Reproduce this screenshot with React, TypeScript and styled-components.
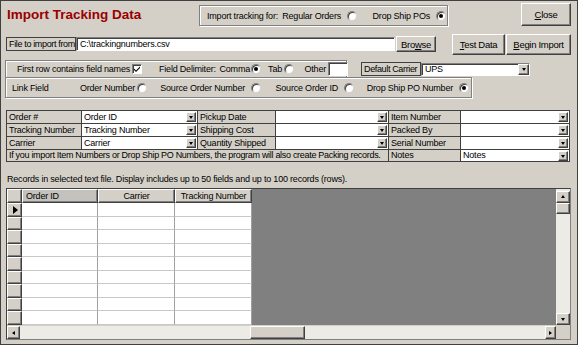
import React from 'react';
import styled, { createGlobalStyle, css } from 'styled-components';

const GlobalStyle = createGlobalStyle`
  body {
    margin: 0;
    background: #fff;
  }
`;

const FONT = `"Liberation Sans", Arial, sans-serif`;

const raised = css`
  box-sizing: border-box;
  background: #d4d0c8;
  border: 1px solid;
  border-color: #fff #404040 #404040 #fff;
  box-shadow: inset -1px -1px 0 #808080;
`;

const sunken = css`
  box-sizing: border-box;
  background: #fff;
  border: 1px solid;
  border-color: #808080 #fff #fff #808080;
  box-shadow: inset 1px 1px 0 #404040;
`;

const etched = css`
  box-sizing: border-box;
  border: 1px solid #808080;
  box-shadow: 1px 1px 0 #fff, inset 1px 1px 0 #fff;
`;

const Window = styled.div`
  width: 578px;
  height: 345px;
  box-sizing: border-box;
  border: 1px solid #404040;
  background: #d4d0c8;
  font-family: ${FONT};
  font-size: 9px;
  letter-spacing: -0.2px;
  color: #000;
  overflow: hidden;
`;

const Row = styled.div<{ $mt?: number; $h: number }>`
  display: flex;
  align-items: center;
  height: ${p => p.$h}px;
  margin-top: ${p => p.$mt ?? 0}px;
`;

const TopBar = styled.div`
  display: flex;
  align-items: flex-start;
  height: 30px;
`;

const Title = styled.h1`
  margin: 6px 0 0 6px;
  width: 192px;
  font-size: 13.5px;
  line-height: 16px;
  letter-spacing: 0;
  font-weight: bold;
  color: #990000;
`;

const GroupBox = styled.div<{ $w: number; $h: number; $ml?: number; $mt?: number }>`
  ${etched};
  display: flex;
  align-items: center;
  width: ${p => p.$w}px;
  height: ${p => p.$h}px;
  margin-left: ${p => p.$ml ?? 0}px;
  margin-top: ${p => p.$mt ?? 0}px;
`;

const Slot = styled.div<{ $w: number; $ml?: number; $end?: boolean; $gap?: number }>`
  display: flex;
  align-items: center;
  justify-content: ${p => (p.$end ? 'flex-end' : 'flex-start')};
  gap: ${p => p.$gap ?? 4}px;
  width: ${p => p.$w}px;
  margin-left: ${p => p.$ml ?? 0}px;
  white-space: nowrap;
  flex-shrink: 0;
`;

const Button = styled.button<{ $w: number; $h: number; $ml?: number; $mt?: number }>`
  ${raised};
  width: ${p => p.$w}px;
  height: ${p => p.$h}px;
  margin-left: ${p => p.$ml ?? 0}px;
  margin-top: ${p => p.$mt ?? 0}px;
  padding: 0;
  font-family: ${FONT};
  font-size: 9.5px;
  letter-spacing: -0.3px;
  color: #000;
  flex-shrink: 0;
`;

const CloseButton = styled(Button)`
  margin-left: auto;
  margin-right: 6px;
`;

const BoxLabel = styled.div<{ $w: number; $ml?: number }>`
  box-sizing: border-box;
  width: ${p => p.$w}px;
  height: 14px;
  margin-left: ${p => p.$ml ?? 0}px;
  padding-left: 2px;
  border: 1px solid #404040;
  line-height: 12px;
  letter-spacing: -0.35px;
  white-space: nowrap;
  flex-shrink: 0;
`;

const TextField = styled.div<{ $w: number; $h?: number }>`
  ${sunken};
  width: ${p => p.$w}px;
  height: ${p => p.$h ?? 14}px;
  padding-left: 3px;
  line-height: ${p => (p.$h ?? 14) - 2}px;
  flex-shrink: 0;
`;

const Radio = styled.span<{ $on?: boolean }>`
  box-sizing: border-box;
  display: inline-flex;
  align-items: center;
  justify-content: center;
  width: 10px;
  height: 10px;
  border-radius: 50%;
  background: #fff;
  border: 1px solid;
  border-color: #808080 #d4d0c8 #d4d0c8 #808080;
  box-shadow: inset 1px 1px 0 #404040;
  flex-shrink: 0;
  &::after {
    content: '';
    width: 4px;
    height: 4px;
    border-radius: 50%;
    background: ${p => (p.$on ? '#000' : 'transparent')};
  }
`;

const CheckBox = styled.span`
  ${sunken};
  display: inline-flex;
  align-items: center;
  justify-content: center;
  width: 10px;
  height: 10px;
  flex-shrink: 0;
`;

const Combo = styled.div<{ $w: number }>`
  ${sunken};
  display: flex;
  align-items: center;
  width: ${p => p.$w}px;
  height: 13px;
  padding-left: 3px;
  flex-shrink: 0;
`;

const ComboText = styled.span`
  flex: 1;
  line-height: 11px;
  white-space: nowrap;
  overflow: hidden;
`;

const ArrowButton = styled.span<{ $w?: number; $h?: number }>`
  ${raised};
  display: inline-flex;
  align-items: center;
  justify-content: center;
  width: ${p => p.$w ?? 10}px;
  height: ${p => p.$h ?? 10}px;
  flex-shrink: 0;
`;

const Tri = styled.span<{ $dir: 'up' | 'down' | 'left' | 'right' }>`
  width: 0;
  height: 0;
  border: 2px solid transparent;
  ${p =>
    p.$dir === 'down'
      ? css`border-top: 3px solid #000; border-bottom-width: 0; margin-top: 1px;`
      : p.$dir === 'up'
      ? css`border-bottom: 3px solid #000; border-top-width: 0; margin-bottom: 1px;`
      : p.$dir === 'left'
      ? css`border-right: 3px solid #000; border-left-width: 0;`
      : css`border-left: 3px solid #000; border-right-width: 0;`}
`;

const MapGrid = styled.div`
  display: grid;
  grid-template-columns: 75px 116px 78px 113px 72px 109px;
  grid-template-rows: 13px 13px 13px 12px;
  width: 564px;
  box-sizing: border-box;
  margin: 12px 0 0 5px;
  border-top: 1px solid #404040;
  border-left: 1px solid #404040;
`;

const MapCell = styled.div<{ $white?: boolean; $span?: number }>`
  box-sizing: border-box;
  display: flex;
  align-items: center;
  padding-left: 2px;
  border-right: 1px solid #404040;
  border-bottom: 1px solid #404040;
  background: ${p => (p.$white ? '#fff' : '#d4d0c8')};
  grid-column: ${p => (p.$span ? `span ${p.$span}` : 'auto')};
  letter-spacing: ${p => (p.$span ? -0.3 : -0.2)}px;
  white-space: nowrap;
  overflow: hidden;
  line-height: 11px;
`;

const Note = styled.div`
  margin: 11px 0 0 6px;
  height: 13px;
  line-height: 13px;
  white-space: nowrap;
`;

const DataFrame = styled.div`
  box-sizing: border-box;
  width: 565px;
  height: 152px;
  margin: 2px 0 0 5px;
  border: 1px solid;
  border-color: #404040 #808080 #808080 #404040;
  display: flex;
  flex-direction: column;
`;

const DataBody = styled.div`
  display: flex;
  height: 136px;
`;

const Sheet = styled.div`
  display: flex;
  flex-direction: column;
  width: 245px;
  background: #fff;
`;

const SheetRow = styled.div<{ $h: number }>`
  display: grid;
  grid-template-columns: 15px 76px 77px 77px;
  height: ${p => p.$h}px;
`;

const HeadCell = styled.div<{ $dark?: boolean; $left?: boolean }>`
  ${raised};
  background: ${p => (p.$dark ? '#c4c2bc' : '#d4d0c8')};
  display: flex;
  align-items: center;
  justify-content: ${p => (p.$left ? 'flex-start' : 'center')};
  padding-left: ${p => (p.$left ? 3 : 0)}px;
  white-space: nowrap;
  overflow: hidden;
  line-height: 12px;
`;

const Selector = styled.div`
  ${raised};
  display: flex;
  align-items: center;
  justify-content: center;
`;

const Pointer = styled.span`
  width: 0;
  height: 0;
  border-top: 4px solid transparent;
  border-bottom: 4px solid transparent;
  border-left: 5px solid #000;
  margin-left: 1px;
`;

const DataCell = styled.div`
  box-sizing: border-box;
  border-right: 1px solid #a0a0a0;
  border-bottom: 1px solid #c8c8c8;
  background: #fff;
`;

const Backdrop = styled.div`
  flex: 1;
  background: #808080;
`;

const VScroll = styled.div`
  display: flex;
  flex-direction: column;
  width: 14px;
  background: #ecebe6;
  padding-top: 2px;
  box-sizing: border-box;
`;

const Track = styled.div<{ $w?: number }>`
  flex: ${p => (p.$w ? 'none' : 1)};
  width: ${p => (p.$w ? `${p.$w}px` : 'auto')};
`;

const Thumb = styled.div<{ $w: number; $h: number }>`
  ${raised};
  width: ${p => p.$w}px;
  height: ${p => p.$h}px;
  flex-shrink: 0;
`;

const HScroll = styled.div`
  display: flex;
  height: 14px;
  background: #ecebe6;
  border-top: 1px solid #d4d0c8;
  box-sizing: border-box;
`;

const Corner = styled.div`
  width: 14px;
  background: #d4d0c8;
`;

const rowHeights = [14, 13, 14, 13, 14, 13, 14, 13, 14];

const mapping: [string, string, string, string, string, string][] = [
  ['Order #', 'Order ID', 'Pickup Date', '', 'Item Number', ''],
  ['Tracking Number', 'Tracking Number', 'Shipping Cost', '', 'Packed By', ''],
  ['Carrier', 'Carrier', 'Quantity Shipped', '', 'Serial Number', ''],
];

const ComboCell = ({ value }: { value: string }) => (
  <MapCell $white>
    <ComboText>{value}</ComboText>
    <ArrowButton $w={10} $h={10} style={{ marginRight: 1 }}>
      <Tri $dir="down" />
    </ArrowButton>
  </MapCell>
);

const App = () => (
  <>
    <GlobalStyle />
    <Window>
      <TopBar>
        <Title>Import Tracking Data</Title>
        <GroupBox $w={249} $h={21} $mt={4}>
          <Slot $w={78} $ml={7}>Import tracking for:</Slot>
          <Slot $w={72} $end $gap={6}>Regular Orders <Radio /></Slot>
          <Slot $w={89} $end $gap={6}>Drop Ship POs <Radio $on /></Slot>
        </GroupBox>
        <CloseButton $w={50} $h={23} $mt={2}>
          <u>C</u>lose
        </CloseButton>
      </TopBar>

      <Row $h={22} $mt={2}>
        <BoxLabel $w={70} $ml={5}>File to import from</BoxLabel>
        <TextField $w={319}>C:\trackingnumbers.csv</TextField>
        <Button $w={40} $h={16} $ml={1}>
          Bro<u>w</u>se
        </Button>
        <Button $w={53} $h={21} $ml={16}>
          <u>T</u>est Data
        </Button>
        <Button $w={65} $h={21} $ml={1}>
          <u>B</u>egin Import
        </Button>
      </Row>

      <Row $h={18} $mt={5}>
        <GroupBox $w={342} $h={18} $ml={4}>
          <Slot $w={129} $ml={7} $end $gap={2}>
            First row contains field names
            <CheckBox>
              <svg width="8" height="8" viewBox="0 0 8 8">
                <path d="M1 3.5 L3 5.5 L7 1.5 L7 3 L3 7 L1 5 Z" fill="#000" />
              </svg>
            </CheckBox>
          </Slot>
          <Slot $w={60} $ml={17}>Field Delimiter:</Slot>
          <Slot $w={39} $ml={3} $end $gap={1}>Comma <Radio $on /></Slot>
          <Slot $w={30} $ml={3} $end $gap={2}>Tab <Radio /></Slot>
          <Slot $w={42} $ml={12} $end $gap={2}>
            Other <TextField $w={20} $h={14} />
          </Slot>
        </GroupBox>
        <BoxLabel $w={60} $ml={14}>Default Carrier</BoxLabel>
        <Combo $w={109}>
          <ComboText>UPS</ComboText>
          <ArrowButton $w={11} $h={11}>
            <Tri $dir="down" />
          </ArrowButton>
        </Combo>
      </Row>

      <Row $h={21} $mt={-1}>
        <GroupBox $w={467} $h={21} $ml={4}>
          <Slot $w={50} $ml={6}>Link Field</Slot>
          <Slot $w={85} $end $gap={2}>Order Number <Radio /></Slot>
          <Slot $w={114} $end $gap={6}>Source Order Number <Radio /></Slot>
          <Slot $w={93} $end $gap={6}>Source Order ID <Radio /></Slot>
          <Slot $w={115} $end $gap={6}>Drop Ship PO Number <Radio $on /></Slot>
        </GroupBox>
      </Row>

      <MapGrid>
        {mapping.map(r => (
          <React.Fragment key={r[0]}>
            <MapCell>{r[0]}</MapCell>
            <ComboCell value={r[1]} />
            <MapCell>{r[2]}</MapCell>
            <ComboCell value={r[3]} />
            <MapCell>{r[4]}</MapCell>
            <ComboCell value={r[5]} />
          </React.Fragment>
        ))}
        <MapCell $span={4}>
          If you import Item Numbers or Drop Ship PO Numbers, the program will also create Packing records.
        </MapCell>
        <MapCell>Notes</MapCell>
        <ComboCell value="Notes" />
      </MapGrid>

      <Note>
        Records in selected text file. Display includes up to 50 fields and up to 100 records (rows).
      </Note>

      <DataFrame>
        <DataBody>
          <Sheet>
            <SheetRow $h={14}>
              <HeadCell />
              <HeadCell $dark $left>Order ID</HeadCell>
              <HeadCell>Carrier</HeadCell>
              <HeadCell>Tracking Number</HeadCell>
            </SheetRow>
            {rowHeights.map((h, i) => (
              <SheetRow key={i} $h={h}>
                <Selector>{i === 0 && <Pointer />}</Selector>
                <DataCell />
                <DataCell />
                <DataCell />
              </SheetRow>
            ))}
          </Sheet>
          <Backdrop />
          <VScroll>
            <ArrowButton $w={14} $h={12}>
              <Tri $dir="up" />
            </ArrowButton>
            <Thumb $w={14} $h={11} />
            <Track />
            <ArrowButton $w={14} $h={12}>
              <Tri $dir="down" />
            </ArrowButton>
          </VScroll>
        </DataBody>
        <HScroll>
          <ArrowButton $w={13} $h={13}>
            <Tri $dir="left" />
          </ArrowButton>
          <Track $w={230} />
          <Thumb $w={55} $h={13} />
          <Track />
          <ArrowButton $w={11} $h={13}>
            <Tri $dir="right" />
          </ArrowButton>
          <Corner />
        </HScroll>
      </DataFrame>
    </Window>
  </>
);

export default App;
